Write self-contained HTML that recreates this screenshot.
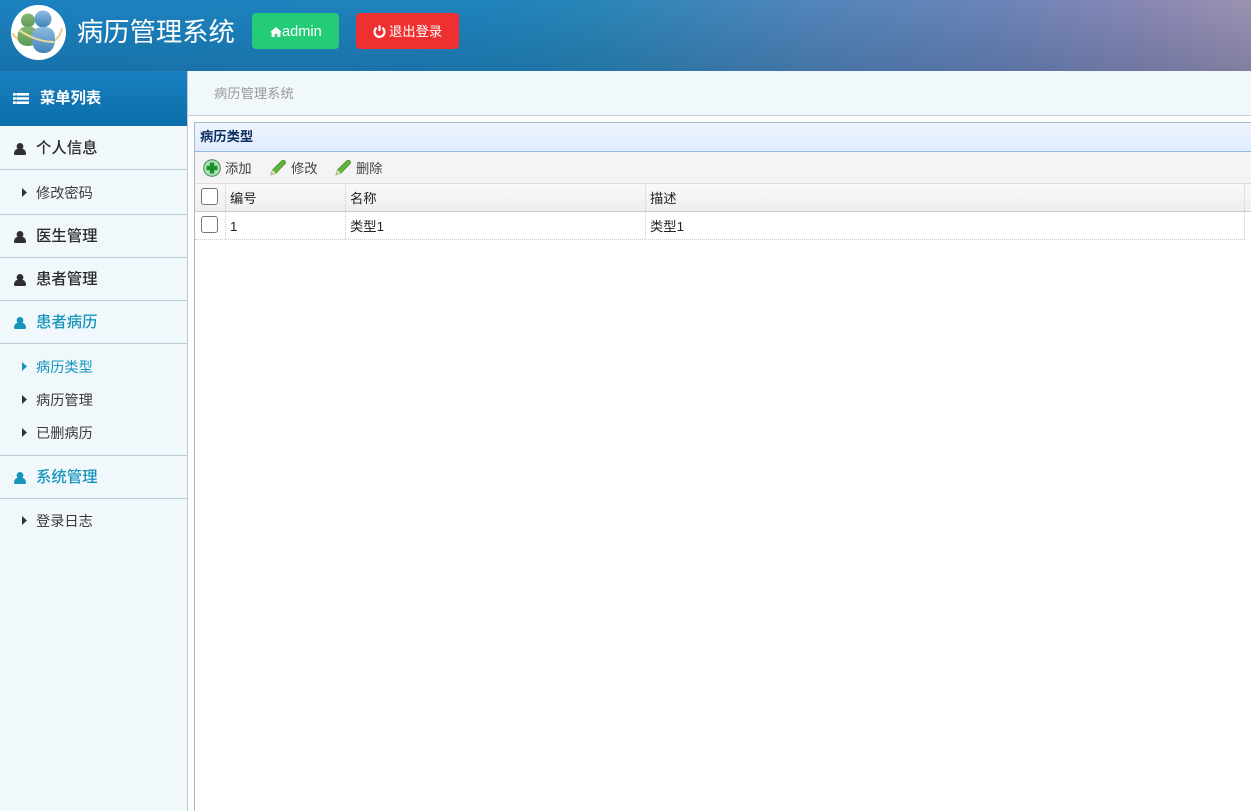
<!DOCTYPE html>
<html lang="zh">
<head>
<meta charset="utf-8">
<title>病历管理系统</title>
<style>
html,body{margin:0;padding:0;width:1251px;height:811px;overflow:hidden;background:#fff;}
body{position:relative;font-family:"Liberation Sans","Noto Sans CJK SC",sans-serif;color:#333;}
.a{position:absolute;white-space:nowrap;}
svg{position:absolute;display:block;}
#hd{left:0;top:0;width:1251px;height:71px;background:linear-gradient(180deg,rgba(8,40,70,0) 0%,rgba(8,40,70,.18) 100%),linear-gradient(90deg,#1b82c0 0,#1f83bc 480px,#2a86b8 600px,#5085bb 800px,#6d84b8 1000px,#8a88b5 1150px,#9c92b2 1251px);}
#logo{left:11px;top:5px;width:55px;height:55px;border-radius:50%;background:#fff;}
#ttl{left:77px;top:13px;font-size:26.3px;line-height:38px;color:#fff;}
.btn{top:13px;height:36px;border-radius:4px;color:#fff;font-size:13.3px;line-height:36px;}
#b1{left:252px;width:87px;background:#25cc78;}
#b2{left:356px;width:103px;background:#ef3030;}
#side{left:0;top:71px;width:187px;height:740px;background:#f1f8fc;border-right:1px solid #b9c8d6;}
#mh{left:0;top:71px;width:187px;height:55px;background:linear-gradient(180deg,#1a80bf 0%,#0a6ea9 100%);}
#mh span{position:absolute;left:40px;top:16px;font-size:15.3px;line-height:23px;font-weight:700;color:#fff;}
.ln{left:0;width:187px;height:1px;background:#b9cad8;}
.g{left:36px;font-size:15.4px;line-height:22px;font-weight:500;color:#2b2b2b;}
.s{left:36px;font-size:14.2px;line-height:20px;color:#3a3a3a;}
.c{color:#1695bd;}
#bc{left:188px;top:71px;width:1063px;height:44px;background:#f1f8fc;border-bottom:1px solid #c6d0d8;}
#bc span{position:absolute;left:26px;top:13px;font-size:13.3px;line-height:20px;color:#999;}
#pl{left:194px;top:122px;width:1057px;height:689px;border-left:1px solid #a9b9cc;border-top:1px solid #a9b9cc;background:#fff;}
#ph{left:195px;top:123px;width:1056px;height:28px;background:linear-gradient(180deg,#eff5ff 0%,#e0ecff 100%);border-bottom:1px solid #95b8e7;}
#ph span{position:absolute;left:5px;top:5px;font-size:13.3px;line-height:18px;font-weight:700;color:#0e2d5f;}
#tb{left:195px;top:152px;width:1056px;height:31px;background:#f4f4f4;border-bottom:1px solid #dddddd;}
.t{font-size:13.3px;line-height:20px;color:#444;}
#th{left:195px;top:184px;width:1056px;height:27px;background:linear-gradient(180deg,#f9f9f9 0%,#efefef 100%);border-bottom:1px solid #ccc;}
#tr{left:195px;top:212px;width:1050px;height:27px;background:#fff;border-bottom:1px dotted #ccc;}
.v{top:184px;width:0;height:55px;border-left:1px dotted #ccc;}
.cb{left:201px;width:15px;height:15px;border:1px solid #767676;border-radius:3px;background:#fff;}
.k{font-size:13.3px;line-height:20px;color:#222;}
</style>
</head>
<body>
<div class="a" id="hd"></div>
<div class="a" id="logo"></div>
<svg style="left:11px;top:5px" width="55" height="55" viewBox="0 0 55 55">
<defs>
<linearGradient id="gr" x1="0" y1="0" x2="0" y2="1"><stop offset="0" stop-color="#86b874"/><stop offset="1" stop-color="#5a9a56"/></linearGradient>
<linearGradient id="bl" x1="0" y1="0" x2="0" y2="1"><stop offset="0" stop-color="#8dbbe0"/><stop offset="1" stop-color="#3f83b8"/></linearGradient>
</defs>
<path d="M2 28C3 34 14 38 28 40C40 41 49 34 51 23" fill="none" stroke="#eccb80" stroke-width="2"/>
<circle cx="17" cy="15.500" r="7" fill="url(#gr)"/>
<path d="M6.500 32C6.500 25 10 21.500 17 21.500C24 21.500 27 25 27 32C27 38 23 41 17 41C11 41 6.500 38 6.500 32Z" fill="url(#gr)"/>
<circle cx="32" cy="14" r="8.500" fill="url(#bl)"/>
<path d="M21 33C21 25 25 22 32.500 22C40 22 44 25 44 33C44 43 40 48 32.500 48C25 48 21 43 21 33Z" fill="url(#bl)"/>
<path d="M8 25C15 30 28 37 43 37" fill="none" stroke="#eedd96" stroke-width="2"/>
</svg>
<div class="a" id="ttl">病历管理系统</div>
<div class="a btn" id="b1"><span class="a" style="left:30px;top:1px;font-size:14.6px">admin</span></div>
<svg style="left:270px;top:27px" width="12" height="10" viewBox="0 0 12 10"><path d="M6 0L12 5.200H10.400V10H7.300V6.700H4.700V10H1.600V5.200H0Z" fill="#fff"/></svg>
<div class="a btn" id="b2"><span class="a" style="left:33px;top:1px">退出登录</span></div>
<svg style="left:373px;top:25px" width="13" height="13" viewBox="0 0 13 13"><path d="M3.600 2.800A5 5 0 1 0 9.400 2.800" fill="none" stroke="#fff" stroke-width="2.200"/><path d="M6.500 0.300V6" stroke="#fff" stroke-width="2.200"/></svg>

<div class="a" id="side"></div>
<div class="a" id="mh"><span>菜单列表</span></div>
<svg style="left:13px;top:93px" width="16" height="11" viewBox="0 0 16 11" fill="#fff"><rect width="2.800" height="2.600"/><rect x="3.300" width="12.700" height="2.600"/><rect y="4.200" width="2.800" height="2.600"/><rect x="3.300" y="4.200" width="12.700" height="2.600"/><rect y="8.400" width="2.800" height="2.600"/><rect x="3.300" y="8.400" width="12.700" height="2.600"/></svg>

<div class="a ln" style="top:169px"></div>
<div class="a ln" style="top:214px"></div>
<div class="a ln" style="top:257px"></div>
<div class="a ln" style="top:300px"></div>
<div class="a ln" style="top:343px"></div>
<div class="a ln" style="top:455px"></div>
<div class="a ln" style="top:498px"></div>

<svg style="left:14px;top:143px" width="12" height="12" viewBox="0 0 12 12" fill="#2f2f2f"><circle cx="6" cy="3.400" r="3.400"/><path d="M0 10.800C0 8 1.500 6.200 4 5.600H8C10.500 6.200 12 8 12 10.800C12 11.600 11.500 12 11 12H1C.5 12 0 11.600 0 10.800Z"/></svg>
<svg style="left:14px;top:231px" width="12" height="12" viewBox="0 0 12 12" fill="#2f2f2f"><circle cx="6" cy="3.400" r="3.400"/><path d="M0 10.800C0 8 1.500 6.200 4 5.600H8C10.500 6.200 12 8 12 10.800C12 11.600 11.500 12 11 12H1C.5 12 0 11.600 0 10.800Z"/></svg>
<svg style="left:14px;top:274px" width="12" height="12" viewBox="0 0 12 12" fill="#2f2f2f"><circle cx="6" cy="3.400" r="3.400"/><path d="M0 10.800C0 8 1.500 6.200 4 5.600H8C10.500 6.200 12 8 12 10.800C12 11.600 11.500 12 11 12H1C.5 12 0 11.600 0 10.800Z"/></svg>
<svg style="left:14px;top:317px" width="12" height="12" viewBox="0 0 12 12" fill="#1695bd"><circle cx="6" cy="3.400" r="3.400"/><path d="M0 10.800C0 8 1.500 6.200 4 5.600H8C10.500 6.200 12 8 12 10.800C12 11.600 11.500 12 11 12H1C.5 12 0 11.600 0 10.800Z"/></svg>
<svg style="left:14px;top:472px" width="12" height="12" viewBox="0 0 12 12" fill="#1695bd"><circle cx="6" cy="3.400" r="3.400"/><path d="M0 10.800C0 8 1.500 6.200 4 5.600H8C10.500 6.200 12 8 12 10.800C12 11.600 11.500 12 11 12H1C.5 12 0 11.600 0 10.800Z"/></svg>

<div class="a g" style="top:138px">个人信息</div>
<div class="a g" style="top:226px">医生管理</div>
<div class="a g" style="top:269px">患者管理</div>
<div class="a g c" style="top:312px">患者病历</div>
<div class="a g c" style="top:467px">系统管理</div>

<svg style="left:22px;top:188px" width="5" height="9" viewBox="0 0 5 9"><path d="M0 0L5 4.500L0 9Z" fill="#333"/></svg>
<svg style="left:22px;top:362px" width="5" height="9" viewBox="0 0 5 9"><path d="M0 0L5 4.500L0 9Z" fill="#1695bd"/></svg>
<svg style="left:22px;top:395px" width="5" height="9" viewBox="0 0 5 9"><path d="M0 0L5 4.500L0 9Z" fill="#333"/></svg>
<svg style="left:22px;top:428px" width="5" height="9" viewBox="0 0 5 9"><path d="M0 0L5 4.500L0 9Z" fill="#333"/></svg>
<svg style="left:22px;top:516px" width="5" height="9" viewBox="0 0 5 9"><path d="M0 0L5 4.500L0 9Z" fill="#333"/></svg>

<div class="a s" style="top:184px">修改密码</div>
<div class="a s c" style="top:358px">病历类型</div>
<div class="a s" style="top:391px">病历管理</div>
<div class="a s" style="top:424px">已删病历</div>
<div class="a s" style="top:512px">登录日志</div>

<div class="a" id="bc"><span>病历管理系统</span></div>
<div class="a" id="pl"></div>
<div class="a" id="ph"><span>病历类型</span></div>
<div class="a" id="tb"></div>
<svg style="left:203px;top:159px" width="18" height="18" viewBox="0 0 18 18"><circle cx="9" cy="9" r="8.300" fill="#b4dfba" stroke="#3f8a4e"/><path d="M6.800 3.500H11.200V6.800H14.500V11.200H11.200V14.500H6.800V11.200H3.500V6.800H6.800Z" fill="#14942a"/></svg>
<div class="a t" style="left:225px;top:159px">添加</div>
<svg style="left:270px;top:159px" width="17" height="17" viewBox="0 0 17 17"><path d="M1 16L2.500 10.800L11.800 1.800C12.800 1 13.800 1 14.800 1.800C15.800 2.800 15.800 3.800 15 4.800L6 14.200Z" fill="#62b33c" stroke="#3f8f27" stroke-width=".7"/><path d="M1 16L2.500 10.800L6 14.200Z" fill="#e2d6a8"/></svg>
<div class="a t" style="left:291px;top:159px">修改</div>
<svg style="left:335px;top:159px" width="17" height="17" viewBox="0 0 17 17"><path d="M1 16L2.500 10.800L11.800 1.800C12.800 1 13.800 1 14.800 1.800C15.800 2.800 15.800 3.800 15 4.800L6 14.200Z" fill="#62b33c" stroke="#3f8f27" stroke-width=".7"/><path d="M1 16L2.500 10.800L6 14.200Z" fill="#e2d6a8"/></svg>
<div class="a t" style="left:356px;top:159px">删除</div>

<div class="a" id="th"></div>
<div class="a" id="tr"></div>
<div class="a v" style="left:225px"></div>
<div class="a v" style="left:345px"></div>
<div class="a v" style="left:645px"></div>
<div class="a v" style="left:1244px"></div>
<div class="a cb" style="top:188px"></div>
<div class="a cb" style="top:216px"></div>
<div class="a k" style="left:230px;top:189px">编号</div>
<div class="a k" style="left:350px;top:189px">名称</div>
<div class="a k" style="left:650px;top:189px">描述</div>
<div class="a k" style="left:230px;top:217px">1</div>
<div class="a k" style="left:350px;top:217px">类型1</div>
<div class="a k" style="left:650px;top:217px">类型1</div>
</body>
</html>
